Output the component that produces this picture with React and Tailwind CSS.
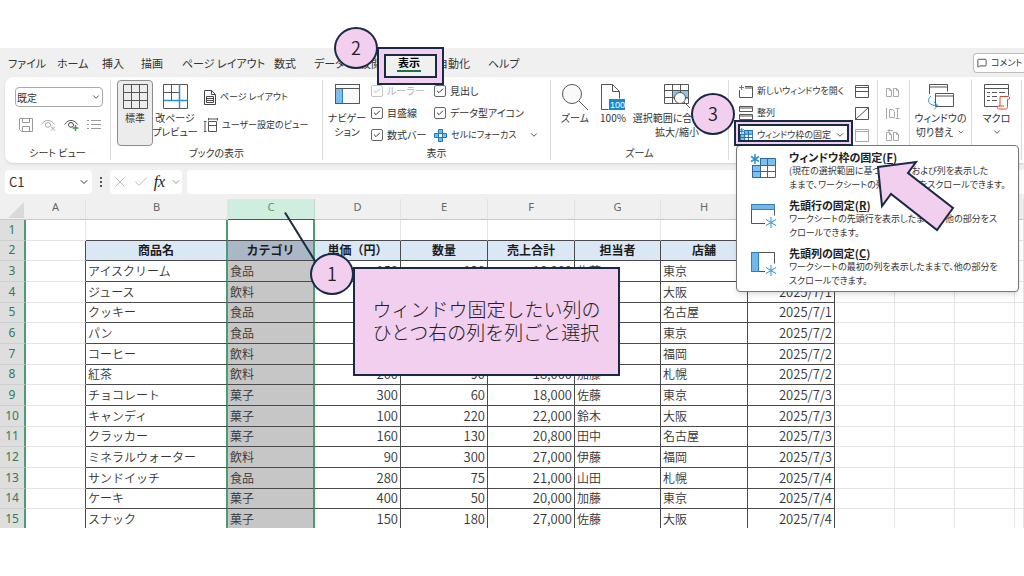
import { useState } from "react";
import { Check, ChevronDown, MessageSquare, X } from "lucide-react";
import { clsx } from "clsx";

const columns = [
  { name: "A", width: "w-[60px]" },
  { name: "B", width: "w-[142px]" },
  { name: "C", width: "w-[87px]" },
  { name: "D", width: "w-[86px]" },
  { name: "E", width: "w-[87px]" },
  { name: "F", width: "w-[87px]" },
  { name: "G", width: "w-[86px]" },
  { name: "H", width: "w-[87px]" },
  { name: "I", width: "w-[87px]" },
  { name: "J", width: "w-[60px]" },
  { name: "K", width: "w-[60px]" },
  { name: "L", width: "w-[60px]" },
  { name: "", width: "" },
];

const headings = ["商品名", "カテゴリ", "単価（円）", "数量", "売上合計", "担当者", "店舗", "日付"];

const records = [
  ["アイスクリーム", "食品", "150", "120", "18,000", "佐藤", "東京", "2025/7/1"],
  ["ジュース", "飲料", "120", "200", "24,000", "鈴木", "大阪", "2025/7/1"],
  ["クッキー", "食品", "200", "80", "16,000", "田中", "名古屋", "2025/7/1"],
  ["パン", "食品", "180", "100", "18,000", "伊藤", "東京", "2025/7/2"],
  ["コーヒー", "飲料", "250", "90", "22,500", "山田", "福岡", "2025/7/2"],
  ["紅茶", "飲料", "200", "90", "18,000", "加藤", "札幌", "2025/7/2"],
  ["チョコレート", "菓子", "300", "60", "18,000", "佐藤", "東京", "2025/7/3"],
  ["キャンディ", "菓子", "100", "220", "22,000", "鈴木", "大阪", "2025/7/3"],
  ["クラッカー", "菓子", "160", "130", "20,800", "田中", "名古屋", "2025/7/3"],
  ["ミネラルウォーター", "飲料", "90", "300", "27,000", "伊藤", "福岡", "2025/7/3"],
  ["サンドイッチ", "食品", "280", "75", "21,000", "山田", "札幌", "2025/7/4"],
  ["ケーキ", "菓子", "400", "50", "20,000", "加藤", "東京", "2025/7/4"],
  ["スナック", "菓子", "150", "180", "27,000", "佐藤", "大阪", "2025/7/4"],
];

const sheetRows = [null, headings, ...records];

/* ---------- Icons ---------- */

const GridIcon = ({ preview }) => (
  <svg width="25" height="25" viewBox="0 0 25 25" fill="none" stroke="#555">
    {preview ? (
      <>
        <path d="M.5 .5h24v24H.5zM.5 8.500h16M8.500 .5v16" />
        <path d="M16.500 .5v24M.5 16.500h24" stroke="#2b8fd6" strokeWidth="1.500" />
      </>
    ) : (
      <path d="M.5 .5h24v24H.5zM.5 8.500h24M.5 16.500h24M8.500 .5v24M16.500 .5v24" />
    )}
  </svg>
);

const SaveIcon = () => (
  <svg width="14" height="14" viewBox="0 0 14 14" fill="none" stroke="#9a9a9a">
    <path d="M.5 .5h13v13H2.500l-2-2zM3.500 .5v4h7v-4M3.500 13.500v-5h7v5" />
  </svg>
);

const EyeIcon = ({ add }) => (
  <svg width="15" height="14" viewBox="0 0 15 14" fill="none" stroke={add ? "#444" : "#a5a5a5"}>
    <path d="M.7 6.500C3 3 5 2.500 7 2.500s4.500.8 6.500 4M4.500 7a2.500 2.500 0 1 1 5 0c0 1.200-1 2.200-2.500 2.200S4.500 8.200 4.500 7z" />
    {add ? (
      <path d="M11.500 7v6M8.500 10h6" stroke="#3a9a4a" strokeWidth="1.500" />
    ) : (
      <path d="M10 8.500l4 4M14 8.500l-4 4" />
    )}
  </svg>
);

const ListIcon = () => (
  <svg width="14" height="12" viewBox="0 0 14 12" stroke="#9a9a9a">
    <path d="M0 1.500h2M4 1.500h10M0 5.500h2M4 5.500h10M0 9.500h2M4 9.500h10" />
  </svg>
);

const PageIcon = () => (
  <svg width="12" height="15" viewBox="0 0 12 15" fill="none" stroke="#444">
    <path d="M.5 .5h7l4 4v10H.5zM7.500 .5v4h4M2.500 6.500h7v6h-7zM2.500 8.500h7M2.500 10.500h7" />
  </svg>
);

const CustomViewIcon = () => (
  <svg width="14" height="14" viewBox="0 0 14 14" fill="none" stroke="#555">
    <path d="M4.500 3.500h8v10h-8zM4.500 7.500h8M4 1h10M4.500 0v2.500M13.500 0v2.500M1 3v11M0 3.500h2.500M0 13.500h2.500" />
  </svg>
);

const NavigationIcon = () => (
  <svg width="25" height="20" viewBox="0 0 25 20" fill="none" stroke="#555">
    <path d="M.5 .5h24v19H.5z" fill="#fafafa" />
    <path d="M.5 4.500h7v15h-7z" fill="#7fbdec" stroke="#2b7fc0" />
    <path d="M.5 4.500h24M.5 .5h24v19H.5z" />
  </svg>
);

const FocusIcon = () => (
  <svg width="13" height="13" viewBox="0 0 13 13" stroke="#1b76b5">
    <path d="M4.500 .5h4v4h4v4h-4v4h-4v-4h-4v-4h4z" fill="#79bdea" />
    <path d="M4.500 4.500h4v4h-4z" fill="#fff" />
  </svg>
);

const ZoomIcon = () => (
  <svg width="27" height="27" viewBox="0 0 27 27" fill="none" stroke="#555">
    <circle cx="10" cy="10" r="9.500" fill="#fafafa" />
    <path d="M17 17l9 9" />
  </svg>
);

const ZoomHundredIcon = () => (
  <svg width="25" height="27" viewBox="0 0 25 27" fill="none" stroke="#555">
    <path d="M.5 25.500V.5h11l7 7v7M11.500 .5v7h7M.5 25.500h7" />
    <path d="M8 15h16v11H8z" fill="#1787d4" stroke="none" />
    <text x="9" y="24" fontSize="9" fill="#fff" stroke="none" fontFamily="Liberation Sans, sans-serif">
      100
    </text>
  </svg>
);

const ZoomSelectionIcon = () => (
  <svg width="26" height="25" viewBox="0 0 26 25" fill="none" stroke="#555">
    <path d="M8 6h16v9H8z" fill="#8cc6f0" stroke="none" />
    <path d="M.5 .5h24v19H.5zM.5 6.500h24M.5 13.500h24M8.500 .5v19M16.500 .5v19" />
    <circle cx="16" cy="14" r="5.500" fill="#fff" />
    <path d="M20 18l6 6" />
  </svg>
);

const NewWindowIcon = () => (
  <svg width="14" height="13" viewBox="0 0 14 13" fill="none" stroke="#555">
    <path d="M.5 5v7.500h13v-11H6M6 3h7" />
    <path d="M2.500 0v5M0 2.500h5" stroke="#3a9a4a" />
  </svg>
);

const ArrangeIcon = () => (
  <svg width="14" height="14" viewBox="0 0 14 14" fill="none" stroke="#555">
    <path d="M.5 .5h13v5H.5zM.5 8.500h13v5H.5zM.5 2h13M.5 10h13" />
  </svg>
);

const FreezeIcon = ({ large }) => (
  <svg width={large ? 26 : 14} height={large ? 26 : 14} viewBox="0 0 26 26" fill="none">
    <path d="M10 4h15v7h-15zM2 11h8v12H2z" fill="#7dbfee" />
    <path
      d="M10 4.500h15.500v19H2.500V11M2.500 11.500h23M2.500 17.500h23M10.500 4v19M17.500 4v19"
      stroke={large ? "#35689a" : "#1f6fae"}
      strokeWidth={large ? 1 : 2}
    />
    <path d="M5 0v10M1 2.500l8 5M9 2.500l-8 5" stroke="#2b8fd6" strokeWidth={large ? 1.5 : 2} />
  </svg>
);

const FreezeRowIcon = () => (
  <svg width="26" height="26" viewBox="0 0 26 26" fill="none" stroke="#555">
    <path d="M15 21.500H1.500V2.500h23v11" />
    <path d="M1.500 2.500h23v5h-23z" fill="#74b8ea" stroke="#3a7fb5" />
    <path d="M21 15v11M16 17.500l10 6M26 17.500l-10 6" stroke="#2b8fd6" />
  </svg>
);

const FreezeColumnIcon = () => (
  <svg width="26" height="26" viewBox="0 0 26 26" fill="none" stroke="#555">
    <path d="M15 21.500H1.500V2.500h23v11" />
    <path d="M1.500 2.500h7v19h-7z" fill="#74b8ea" stroke="#2b7fc0" />
    <path d="M21 15v11M16 17.500l10 6M26 17.500l-10 6" stroke="#2b8fd6" />
  </svg>
);

const SplitIcon = () => (
  <svg width="14" height="13" viewBox="0 0 14 13" fill="none" stroke="#555">
    <path d="M.5 .5h13v12H.5zM.5 2.500h13M.5 6.500h13" />
  </svg>
);

const HideIcon = () => (
  <svg width="14" height="13" viewBox="0 0 14 13" fill="none" stroke="#555">
    <path d="M.5 .5h13v12H.5zM.5 12.500l13-12" />
  </svg>
);

const UnhideIcon = () => (
  <svg width="14" height="13" viewBox="0 0 14 13" fill="none" stroke="#aaa">
    <path d="M.5 .5h13v12H.5zM.5 2.500h13" />
  </svg>
);

const SideBySideIcon = ({ mark }) => (
  <svg width="14" height="13" viewBox="0 0 14 13" fill="none" stroke="#aaa">
    {mark === "scroll" ? (
      <path d="M.5 1v11M3.500 2.500h3l2 2v6h-5zM11.500 1v11M9.500 1.500h4M9.500 11.500h4" />
    ) : (
      <path d="M.5 3.500h3l2 2v6h-5zM3.500 3.500v2h2M7.500 3.500h3l2 2v6h-5zM10.500 3.500v2h2" />
    )}
    {mark === "reset" && <path d="M2 1.500h5M3.500 0L2 1.500 3.500 3" />}
  </svg>
);

const SwitchWindowIcon = () => (
  <svg width="27" height="26" viewBox="0 0 27 26" fill="none" stroke="#555">
    <path d="M2.500 10V.5h18v7M2.500 3h18M8.500 9.500h18v13h-18zM8.500 12h18" />
    <path d="M4 12c-5 4-2 10 6 9.500M7 18l4 3.500-4 4" stroke="#2b8fd6" />
  </svg>
);

const MacroIcon = () => (
  <svg width="26" height="26" viewBox="0 0 26 26" fill="none" stroke="#555">
    <path d="M14 22.500H.5V.5h24v11M.5 4.500h24M3 8.500h3M8 8.500h5M15 8.500h6M3 12.500h3M8 12.500h5M3 16.500h3M8 16.500h5" />
    <path d="M16 12.500h8.500c1.500 0 1.500 3 0 3h-1v7c0 3-2 3-3 2.500h-6c-1.500-1-1-3 0-3h1.500zM20 22h-5" fill="#fff" stroke="#e0443e" />
  </svg>
);

/* ---------- Ribbon parts ---------- */

const Group = ({ label, className, children }) => (
  <section className={clsx("flex shrink-0 flex-col border-r border-[#dcdcdc]", className)}>
    <div className="flex flex-1">{children}</div>
    <h2 className="text-center text-[10px] leading-[14px]">{label}</h2>
  </section>
);

const LargeButton = ({ icon, lines, active, caret, className }) => (
  <button
    className={clsx(
      "flex h-[66px] shrink-0 flex-col items-center rounded border text-[10px] leading-[14px] whitespace-nowrap",
      active ? "border-[#8d8d8d] bg-[#ececec]" : "border-transparent",
      className
    )}
  >
    <span className="flex h-[30px] items-start justify-center pt-[3px]">{icon}</span>
    {lines.map((line, index) => (
      <span key={index} className="flex items-center gap-1">
        {line}
      </span>
    ))}
    {caret && <ChevronDown className="mt-[2px] size-[10px]" />}
  </button>
);

const SmallButton = ({ icon, label, caret, disabled }) => (
  <button
    className="flex h-[22px] items-center gap-1 text-[9px] leading-[14px] whitespace-nowrap"
    disabled={disabled}
  >
    {icon}
    {label && <span>{label}</span>}
    {caret && <ChevronDown className="size-[10px]" />}
  </button>
);

const CheckItem = ({ label, disabled }) => {
  const [checked, setChecked] = useState(true);

  return (
    <label
      className={clsx(
        "flex h-[22px] items-center gap-1 text-[10px] leading-[14px] whitespace-nowrap",
        disabled && "text-[#b5b5b5]"
      )}
    >
      <span className="grid place-items-center">
        <input
          type="checkbox"
          className={clsx(
            "col-start-1 row-start-1 size-3 appearance-none rounded-xs border bg-white",
            disabled ? "border-[#c4c4c4]" : "border-[#666]"
          )}
          checked={checked}
          disabled={disabled}
          onChange={() => setChecked(!checked)}
        />
        {checked && <Check className="pointer-events-none col-start-1 row-start-1 size-2" strokeWidth={3} />}
      </span>
      {label}
    </label>
  );
};

const TabBar = () => (
  <nav className="flex h-[29px] items-center pl-2 text-[11px] leading-4 whitespace-nowrap">
    <div className="flex flex-1 pt-px">
      <button className="w-[49px] text-left">ファイル</button>
      <button className="w-[45px] text-left">ホーム</button>
      <button className="w-[39px] text-left">挿入</button>
      <button className="w-[41px] text-left">描画</button>
      <button className="w-[92px] text-left">ページ レイアウト</button>
      <button className="w-[40px] text-left">数式</button>
      <button className="w-[46px] text-left">データ</button>
      <button className="w-[37px] text-left">校閲</button>
      <button className="w-6 border-b-2 border-[#1e7145] font-bold text-black">表示</button>
      <button className="ml-[16px] w-[51px] text-left">自動化</button>
      <button className="text-left">ヘルプ</button>
    </div>
    <button className="flex h-5 w-[51px] items-center gap-1 overflow-hidden rounded-l border border-r-0 border-[#bdbdbd] bg-white pl-[3px] text-[9px]">
      <MessageSquare className="size-[10px] shrink-0" />
      コメント
    </button>
  </nav>
);

const Ribbon = () => (
  <div className="ml-[5px] flex h-[86px] overflow-hidden rounded-l-lg bg-white py-[3px] shadow-sm">
    <Group label="シート ビュー" className="w-[106px]">
      <div className="flex flex-1 flex-col gap-[11px] pt-[7px] pl-[10px]">
        <div className="grid w-[88px] items-center">
          <select
            aria-label="シート ビュー"
            className="col-start-1 row-start-1 h-5 w-full appearance-none rounded border border-[#aaa] bg-white pl-px text-[10px]"
          >
            <option>既定</option>
          </select>
          <ChevronDown className="pointer-events-none col-start-1 row-start-1 mr-[2px] size-[10px] justify-self-end" />
        </div>
        <div className="flex items-center gap-2 pl-1">
          <button aria-label="保存"><SaveIcon /></button>
          <button aria-label="終了"><EyeIcon /></button>
          <button aria-label="新規"><EyeIcon add /></button>
          <button aria-label="オプション"><ListIcon /></button>
        </div>
      </div>
    </Group>

    <Group label="ブックの表示" className="w-[212px]">
      <LargeButton active icon={<GridIcon />} lines={["標準"]} className="ml-[6px] w-9" />
      <LargeButton icon={<GridIcon preview />} lines={["改ページ", "プレビュー"]} className="w-11" />
      <div className="flex flex-col gap-[6px] pt-[6px] pl-[7px]">
        <SmallButton icon={<PageIcon />} label="ページ レイアウト" />
        <SmallButton icon={<CustomViewIcon />} label="ユーザー設定のビュー" />
      </div>
    </Group>

    <Group label="表示" className="w-[228px]">
      <LargeButton icon={<NavigationIcon />} lines={["ナビゲー", "ション"]} className="w-12" />
      <div className="w-[63px]">
        <CheckItem label="ルーラー" disabled />
        <CheckItem label="目盛線" />
        <CheckItem label="数式バー" />
      </div>
      <div>
        <CheckItem label="見出し" />
        <CheckItem label="データ型アイコン" />
        <div className="flex items-center gap-3">
          <SmallButton icon={<FocusIcon />} label="セルにフォーカス" />
          <ChevronDown className="size-[10px]" />
        </div>
      </div>
    </Group>

    <Group label="ズーム" className="w-[178px]">
      <LargeButton icon={<ZoomIcon />} lines={["ズーム"]} className="ml-1 w-10" />
      <LargeButton icon={<ZoomHundredIcon />} lines={["100%"]} className="w-9" />
      <LargeButton icon={<ZoomSelectionIcon />} lines={["選択範囲に合わせて", "拡大/縮小"]} className="w-[92px]" />
    </Group>

    <Group label="ウィンドウ" className="w-[243px]">
      <div className="w-[117px] pl-[10px]">
        <SmallButton icon={<NewWindowIcon />} label="新しいウィンドウを開く" />
        <SmallButton icon={<ArrangeIcon />} label="整列" />
        <SmallButton icon={<FreezeIcon />} label="ウィンドウ枠の固定" caret />
      </div>
      <div className="w-[32px] border-r border-[#dcdcdc] pl-[9px]">
        <SmallButton icon={<SplitIcon />} />
        <SmallButton icon={<HideIcon />} />
        <SmallButton icon={<UnhideIcon />} disabled />
      </div>
      <div className="w-8 border-r border-[#dcdcdc] pl-2">
        <SmallButton icon={<SideBySideIcon />} disabled />
        <SmallButton icon={<SideBySideIcon mark="scroll" />} disabled />
        <SmallButton icon={<SideBySideIcon mark="reset" />} disabled />
      </div>
      <LargeButton
        icon={<SwitchWindowIcon />}
        lines={[
          "ウィンドウの",
          <>
            切り替え
            <ChevronDown className="size-2" />
          </>,
        ]}
        className="w-[61px]"
      />
    </Group>

    <Group label="マクロ" className="w-[50px]">
      <LargeButton icon={<MacroIcon />} lines={["マクロ"]} caret className="w-full" />
    </Group>
  </div>
);

const FormulaBar = () => (
  <div className="mt-[7px] mb-[5px] flex h-6 gap-[5px] pl-[5px]">
    <div className="flex w-[87px] items-center rounded bg-white pr-[2px]">
      <input
        aria-label="名前ボックス"
        className="w-full min-w-0 bg-transparent pl-1 text-[13px] outline-none"
        defaultValue="C1"
      />
      <ChevronDown className="size-3 shrink-0" />
    </div>
    <div className="flex w-2 flex-col items-center justify-center gap-[2px]">
      <i className="size-[2px] bg-[#555]" />
      <i className="size-[2px] bg-[#555]" />
      <i className="size-[2px] bg-[#555]" />
    </div>
    <div className="flex w-[72px] items-center justify-between rounded bg-white pl-[2px] text-[#999]">
      <button aria-label="キャンセル"><X className="size-4" strokeWidth={1} /></button>
      <button aria-label="入力"><Check className="size-4" strokeWidth={1} /></button>
      <button className="font-['Liberation_Serif',serif] text-base leading-5 text-[#222] italic">fx</button>
      <ChevronDown className="size-3" />
    </div>
    <input aria-label="数式バー" className="min-w-0 flex-1 rounded-l bg-white px-2 text-[13px] outline-none" />
  </div>
);

/* ---------- Sheet ---------- */

const cellBorder = (row, col) => {
  const inTable = col >= 1 && col <= 8;
  const selectedEdge = col === 1 || col === 2;
  return clsx(
    inTable ? "border-b-[#4a4a4a]" : "border-b-[#e4e4e4]",
    selectedEdge && "border-r-2 border-r-[#4b9b74]",
    !selectedEdge && "border-r",
    !selectedEdge && (row > 0 && col <= 8 ? "border-r-[#4a4a4a]" : "border-r-[#e4e4e4]")
  );
};

const cellFill = (row, col) => {
  if (row === 0 || col < 1 || col > 8) return "bg-white";
  if (row === 1) return col === 2 ? "bg-[#a9b7c6]" : "bg-[#dae8f6]";
  return col === 2 ? "bg-[#c6c6c6]" : "bg-white";
};

const cellText = (row, col) => {
  if (row === 1) return "text-center text-[12px] font-bold text-[#1c1c1c]";
  if ([3, 4, 5, 8].includes(col)) return "text-right text-[13px] font-[350]";
  return "text-left text-[12px] font-[350]";
};

const Sheet = () => (
  <div className="min-h-0 flex-1 overflow-hidden">
    <table className="h-[331px] w-full table-fixed border-separate border-spacing-0 leading-4 whitespace-nowrap">
      <thead>
        <tr className="bg-[#f0f0f0] font-['Noto_Sans',sans-serif] text-[11px] text-[#666]">
          <th className="h-5 w-[26px] border-b border-[#c8c8c8] p-0" aria-label="すべて選択">
            <svg width="24" height="19" viewBox="0 0 24 19">
              <path d="M24 2v16H8z" fill="#d9d9d9" />
            </svg>
          </th>
          {columns.map(({ name, width }, col) => (
            <th
              key={col}
              className={clsx(
                "h-5 border-r border-b p-0 pb-1 font-normal",
                width,
                name === "C"
                  ? "border-r-[#b9dcc9] border-b-[#217346] bg-[#cfeedd] text-[#4b9b74]"
                  : "border-r-[#e2e2e2] border-b-[#c8c8c8]"
              )}
            >
              {name}
            </th>
          ))}
        </tr>
      </thead>
      <tbody className="text-[#333]">
        {sheetRows.map((cells, row) => (
          <tr key={row}>
            <th className="border-r-2 border-b border-r-[#4b9b74] border-b-[#cfcfcf] bg-[#dedede] p-0 font-['Noto_Sans',sans-serif] text-[12px] font-normal text-[#2f7d55]">
              {row + 1}
            </th>
            {columns.map((column, col) => (
              <td
                key={col}
                className={clsx(
                  "h-[20px] border-b px-[2px] py-0",
                  cellBorder(row, col),
                  cellFill(row, col),
                  cellText(row, col)
                )}
              >
                {cells?.[col - 1]}
              </td>
            ))}
          </tr>
        ))}
      </tbody>
    </table>
  </div>
);

/* ---------- Freeze menu ---------- */

const MenuItem = ({ icon, title, accessKey, lines }) => (
  <button className="flex gap-[13px] text-left">
    <span className="pt-1">{icon}</span>
    <span className="flex flex-col whitespace-nowrap">
      <span className="text-[11px] leading-[14px] font-bold text-[#222]">
        {title}(<u>{accessKey}</u>)
      </span>
      {lines.map((line) => (
        <span key={line} className="text-[9px] leading-[14px]">
          {line}
        </span>
      ))}
    </span>
  </button>
);

const FreezeMenu = () => (
  <div className="absolute top-[145px] left-[736px] flex h-[147px] w-[283px] flex-col gap-[6px] rounded border border-[#777] bg-white pt-1 pl-[13px] shadow-md">
    <MenuItem
      icon={<FreezeIcon large />}
      title="ウィンドウ枠の固定"
      accessKey="F"
      lines={["(現在の選択範囲に基づいて) 行および列を表示した", "ままで、ワークシートの残りの部分をスクロールできます。"]}
    />
    <MenuItem
      icon={<FreezeRowIcon />}
      title="先頭行の固定"
      accessKey="R"
      lines={["ワークシートの先頭行を表示したままで、他の部分をス", "クロールできます。"]}
    />
    <MenuItem
      icon={<FreezeColumnIcon />}
      title="先頭列の固定"
      accessKey="C"
      lines={["ワークシートの最初の列を表示したままで、他の部分を", "スクロールできます。"]}
    />
  </div>
);

/* ---------- Annotations ---------- */

const StepBadge = ({ number, className }) => (
  <div
    className={clsx(
      "absolute flex h-[42px] w-11 items-center justify-center rounded-[50%] border-2 border-[#1a2a44] bg-[#f2ceef] pb-[2px] text-[18px] font-[350] text-[#222]",
      className
    )}
  >
    {number}
  </div>
);

const Annotations = () => (
  <>
    <div className="pointer-events-none absolute top-[47px] left-[377px] h-[38px] w-[67px] border-2 border-[#1a2a44]">
      <div className="h-full border-[5px] border-[#f2ceef]">
        <div className="h-full border-2 border-[#1a2a44]" />
      </div>
    </div>
    <StepBadge number="2" className="top-[27px] left-[334px]" />

    <svg className="pointer-events-none absolute top-[210px] left-[280px]" width="40" height="55" viewBox="280 210 40 55">
      <path d="M285 212.500L315 261" stroke="#1a2a44" strokeWidth="2" />
    </svg>
    <div className="absolute top-[267px] left-[353px] flex h-[109px] w-[267px] items-center justify-center border-2 border-[#1a2a44] bg-[#f2ceef] pb-[4px] text-[19px] leading-[23px] font-light text-[#222]">
      <p className="whitespace-nowrap">
        ウィンドウ固定したい列の
        <br />
        ひとつ右の列を列ごと選択
      </p>
    </div>
    <StepBadge number="1" className="top-[253px] left-[310px]" />

    <div className="pointer-events-none absolute top-[120px] left-[734px] h-[26px] w-[119px] border-2 border-[#1a2a44]">
      <div className="h-full border-2 border-[#f2ceef]">
        <div className="h-full border-2 border-[#1a2a44]" />
      </div>
    </div>
    <StepBadge number="3" className="top-[93px] left-[691px]" />
    <svg className="pointer-events-none absolute top-[155px] left-[870px]" width="90" height="80" viewBox="870 155 90 80">
      <path
        d="M878 167L916 162L908 173L953 208L937 230L891 194L882 206z"
        fill="#f2ceef"
        stroke="#1a2a44"
        strokeWidth="2"
      />
    </svg>
  </>
);

const App = () => (
  <main
    lang="ja"
    className="relative flex h-screen flex-col overflow-hidden bg-white py-12 font-['Noto_Sans_CJK_JP',sans-serif] text-[#333]"
  >
    <div className="bg-[#f0f0f0] [font-feature-settings:'palt']">
      <TabBar />
      <Ribbon />
      <div className="flow-root">
        <FormulaBar />
      </div>
    </div>
    <Sheet />
    <div className="[font-feature-settings:'palt']">
      <FreezeMenu />
    </div>
    <Annotations />
  </main>
);

export default App;
